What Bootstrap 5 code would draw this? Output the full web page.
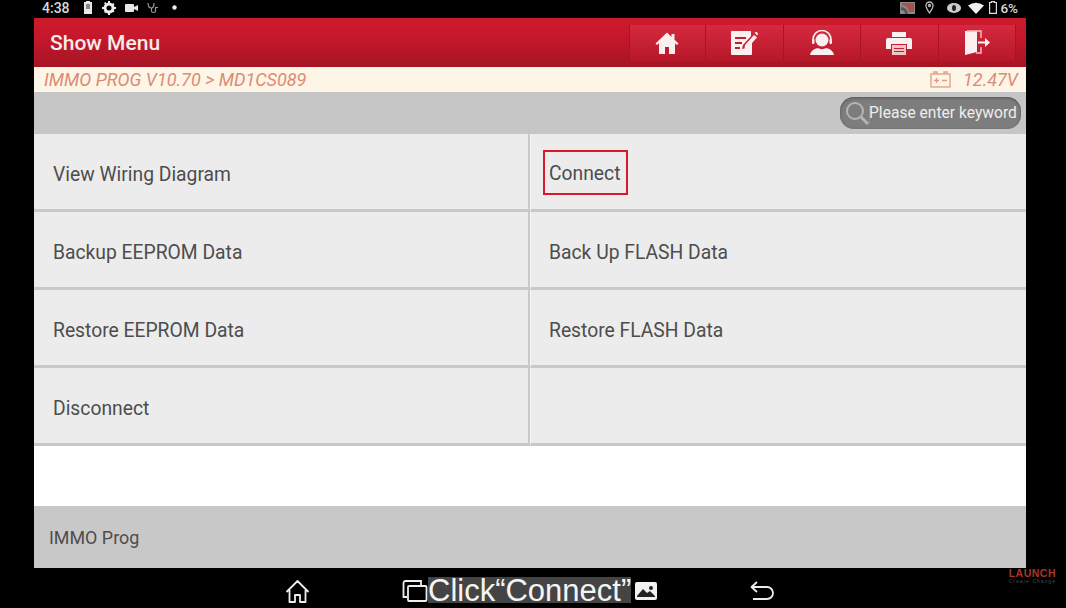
<!DOCTYPE html>
<html>
<head>
    <title>Show Menu</title>
    <meta name="viewport" content="width=device-width, initial-scale=1">
    <link href="https://cdn.jsdelivr.net/npm/bootstrap@5.3.0/dist/css/bootstrap.min.css" rel="stylesheet">
    <style>
        html, body { height: 100%; }
        body {
            background: #000;
            font-family: Roboto, "Liberation Sans", sans-serif;
            overflow: hidden;
        }
        .tablet { position: relative; width: 1066px; height: 608px; background: #000; }

        /* status bar */
        .status-row { height: 18px; padding: 0 48px 3px 42px; color: #d8d8d8; font-size: 14px; font-weight: 500; line-height: 14px; }
        .status-row svg { display: block; }
        .st-battery { margin-left: 13px; }
        .st-gear { margin-left: 9px; }
        .st-cam { margin-left: 9px; }
        .st-steth { margin-left: 9px; }
        .st-dot { margin-left: 13px; }
        .st-pin { margin-left: 10px; }
        .st-eye { margin-left: 13px; }
        .st-wifi { margin-left: 7px; }
        .st-batt2 { margin-left: 5px; }
        .st-pct { margin-left: 3px; font-size: 13.5px; }

        .app-frame { width: 992px; height: 550px; margin-left: 34px; background: #fff; }

        /* red title bar */
        .title-bar {
            height: 49px;
            padding: 6px 10px 6px 16px;
            background: linear-gradient(#cf1a2d 0%, #c2182a 45%, #a61524 100%);
            color: #f6eaea;
        }
        .title-text { font-size: 21px; font-weight: 500; margin-top: 2px; }
        .tool-group { height: 36px; }
        .tool-btn {
            width: 77.5px;
            height: 36px;
            padding: 0;
            border: 0;
            border-right: 1px solid #a81424;
            border-radius: 0;
            background: linear-gradient(#d52940, #b71829);
        }
        .tool-btn:first-child { border-left: 1px solid #a81424; }

        /* breadcrumb strip */
        .crumb-bar {
            height: 25px;
            padding: 0 8px 0 10px;
            background: #fdf6e6;
            color: #dd8a76;
            font-size: 18px;
            font-style: italic;
        }
        .volt-text { margin-left: 12px; }

        /* search strip */
        .search-bar { height: 42px; padding: 5px 5px 0 0; background: #c6c6c6; }
        .search-pill {
            width: 181px;
            height: 32px;
            padding-left: 5px;
            border-radius: 14px;
            background: #7d7d7d;
            box-shadow: inset 0 1px 3px #555;
            color: #eee;
            font-size: 15.6px;
            white-space: nowrap;
        }
        .search-hint { padding-top: 2px; }
        .caret-mark { width: 1px; height: 20px; background: #3fb5ad; margin-right: -1px; }

        /* menu grid */
        .menu-grid { display: grid; grid-template-columns: 496px 496px; grid-auto-rows: 78px; }
        .menu-cell {
            padding: 8px 0 0 19px;
            background: #ececec;
            border-bottom: 3px solid #c9c9c9;
            color: #4d4d4d;
            font-size: 19.3px;
        }
        .menu-cell:nth-child(odd) { border-right: 2px solid #c9c9c9; }
        .menu-cell:nth-child(even) { padding-left: 18px; border-left: 1px solid #f6f6f6; }
        .connect-box { padding: 9px 6px 7px 4px; border: 2px solid #d8192a; line-height: 25px; margin-left: -6px; margin-top: -6px; }
        .blank-gap { height: 60px; background: #fff; }
        .foot-bar { height: 62px; padding: 3px 0 0 15px; background: #c8c8c8; color: #4d4d4d; font-size: 17.9px; }

        /* android nav + caption */
        .nav-row { height: 40px; }
        .nav-row svg { margin-top: 6px; }
        .nav-home { margin-left: 285px; }
        .nav-recent { margin-left: 92px; }
        .caption-text {
            background: #444;
            color: #f4f4f4;
            font-family: "Liberation Sans", Arial, sans-serif;
            font-size: 31px;
            line-height: 28px;
            height: 26px;
            margin-top: 4px;
        }
        .nav-shot { margin-left: 4px; }
        .nav-back { margin-left: 93px; }

        /* watermark sits over the black margin */
        .launch-mark {
            position: absolute;
            right: 10px;
            top: 567px;
            text-align: center;
            color: #a8352b;
            font-family: "Liberation Sans", Arial, sans-serif;
            font-size: 10.5px;
            font-weight: 700;
            line-height: 12px;
            letter-spacing: .5px;
        }
        .launch-sub { color: #4a4a4a; font-size: 5px; font-weight: 400; line-height: 5px; letter-spacing: 1px; }
    </style>
</head>
<body>
<div class="tablet">
    <!-- status bar -->
    <div class="status-row d-flex align-items-center">
        <span>4:38</span>
        <svg class="st-battery" width="10" height="13" viewBox="0 0 10 13" fill="#e8e8e8"><path d="M3 0h4v1h2v12H1V1h2z"/><rect x="3" y="3" width="4" height="5" fill="#888"/></svg>
        <svg class="st-gear" width="14" height="14" viewBox="0 0 14 14"><circle cx="7" cy="7" r="4" fill="none" stroke="#eee" stroke-width="3"/><path d="M6 0h2v2H6zM6 12h2v2H6zM0 6h2v2H0zM12 6h2v2h-2zM2 2l1.500-1 1 1.500-1.500 1zM10 10l1.500-1 1 1.500-1.500 1zM10 3l1.500-1 1 1.500-1.500 1zM2 11l1-1.500 1.500 1-1 1.500z" fill="#eee"/></svg>
        <svg class="st-cam" width="13" height="10" viewBox="0 0 13 10" fill="#e8e8e8"><rect y="1" width="9" height="8" rx="1"/><path d="M9 4l4-2v6L9 6z"/></svg>
        <svg class="st-steth" width="12" height="12" viewBox="0 0 12 12" fill="none" stroke="#999" stroke-width="1.200"><path d="M1 1c0 4 2 5 3.500 5S7 5 7 1M4.500 6v3c0 2 4 2 4 0V6c0-1 2-1 2 0"/></svg>
        <svg class="st-dot" width="5" height="5" viewBox="0 0 5 5"><circle cx="2.500" cy="2.500" r="2.200" fill="#eee"/></svg>
        <div class="ms-auto d-flex align-items-center">
            <svg width="15" height="12" viewBox="0 0 15 12"><rect width="15" height="12" fill="#8a8a8a"/><path d="M1 5a7 7 0 0 1 7 7H5a4 4 0 0 0-4-4z" fill="#555"/><path d="M2 1h12v9H9A8 8 0 0 0 2 3z" fill="#a8534a"/></svg>
            <svg class="st-pin" width="9" height="13" viewBox="0 0 9 13" fill="none" stroke="#bbb" stroke-width="1.300"><path d="M4.500 12C2.500 9 1 7 1 4.500a3.500 3.500 0 0 1 7 0C8 7 6.500 9 4.500 12z"/><circle cx="4.500" cy="4.500" r="1"/></svg>
            <svg class="st-eye" width="14" height="10" viewBox="0 0 14 10"><ellipse cx="7" cy="5" rx="7" ry="5" fill="#ccc"/><ellipse cx="7" cy="5" rx="2" ry="3" fill="#222"/></svg>
            <svg class="st-wifi" width="16" height="12" viewBox="0 0 16 12"><path d="M0 3.500Q8-2 16 3.500L8 12z" fill="#f2f2f2"/></svg>
            <svg class="st-batt2" width="8" height="13" viewBox="0 0 8 13" fill="none" stroke="#ddd" stroke-width="1.200"><path d="M2.500 1.500V.6h3v.9h1.900v10.900H.6V1.500z"/></svg>
            <span class="st-pct">6%</span>
        </div>
    </div>

    <div class="app-frame d-flex flex-column">
        <!-- title bar -->
        <div class="title-bar d-flex align-items-center">
            <span class="title-text">Show Menu</span>
            <div class="tool-group d-flex ms-auto">
                <button class="btn tool-btn d-flex align-items-center justify-content-center" type="button" aria-label="Home">
                    <svg width="24" height="24" viewBox="0 0 24 24" fill="#fbf0f0"><path d="M12 1.500 0.500 12.500l1.500 1.500 2-1.800V23h6v-7h4v7h6V12.200l2 1.800 1.500-1.500-4-3.800V3h-3v3z"/></svg>
                </button>
                <button class="btn tool-btn d-flex align-items-center justify-content-center" type="button" aria-label="Edit">
                    <svg width="28" height="26" viewBox="0 0 28 26"><path d="M1 2a1 1 0 0 1 1-1h19v5l-8 9-1 4 4-1 6-6v12a1 1 0 0 1-1 1H2a1 1 0 0 1-1-1z" fill="#fbf0f0"/><path d="M5 7h11v2H5zM5 12h7v2H5zM5 17h5v2H5z" fill="#c2202f"/><path d="M15 15 24 5l3 2.500-9 10-3.500 1z" fill="#fbf0f0"/><path d="M24.500 2.500l2.500-.5 1 2-1 1.500z" fill="#fbf0f0"/></svg>
                </button>
                <button class="btn tool-btn d-flex align-items-center justify-content-center" type="button" aria-label="Support">
                    <svg width="26" height="26" viewBox="0 0 26 26"><path d="M4 12V9.500a9 9 0 0 1 18 0V12" fill="none" stroke="#fbf0f0" stroke-width="1.500"/><circle cx="13" cy="10" r="6.500" fill="#fbf0f0"/><rect x="3" y="9" width="2.500" height="5" rx="1" fill="#fbf0f0"/><rect x="20.500" y="9" width="2.500" height="5" rx="1" fill="#fbf0f0"/><path d="M1 25c.5-3 3-6 8-7 2 1.500 6 1.500 8 0 5 1 7.500 4 8 7z" fill="#fbf0f0"/></svg>
                </button>
                <button class="btn tool-btn d-flex align-items-center justify-content-center" type="button" aria-label="Print">
                    <svg width="26" height="24" viewBox="0 0 26 24"><path d="M6 1h14v5H6z" fill="#fbf0f0"/><path d="M2 7h22a2 2 0 0 1 2 2v9h-5v-5H5v5H0V9a2 2 0 0 1 2-2z" fill="#fbf0f0"/><path d="M6 14h14v10H6z" fill="#f2c4c8"/><path d="M8 17h10v1H8zM8 20h10v1H8z" fill="#c2202f"/></svg>
                </button>
                <button class="btn tool-btn d-flex align-items-center justify-content-center" type="button" aria-label="Exit">
                    <svg width="26" height="26" viewBox="0 0 26 26"><path d="M1 2h12v21l-12 3z" fill="#fbf0f0" transform="translate(0 -1)"/><path d="M3 1h14v7M17 17v6H12" fill="none" stroke="#f5bcc2" stroke-width="1.500"/><path d="M14 11.500h7V8l5 4.500-5 4.500v-3.500h-7z" fill="#fbf0f0"/></svg>
                </button>
            </div>
        </div>

        <!-- breadcrumb -->
        <div class="crumb-bar d-flex align-items-center">
            <span>IMMO PROG V10.70 &gt; MD1CS089</span>
            <svg class="ms-auto" width="21" height="17" viewBox="0 0 21 17" fill="none" stroke="#e39a84" stroke-width="1.300"><rect x="1" y="3" width="19" height="13"/><path d="M4 3V1h3v2M14 3V1h3v2M4 9.500h5M6.500 7v5M12 9.500h5"/></svg>
            <span class="volt-text">12.47V</span>
        </div>

        <!-- search -->
        <div class="search-bar d-flex justify-content-end">
            <div class="search-pill d-flex align-items-center">
                <svg width="24" height="26" viewBox="0 0 24 26" fill="none" stroke="#b5b5b5"><circle cx="10" cy="11" r="8" stroke-width="2"/><path d="M16 17l7 7" stroke-width="3"/></svg>
                <span class="caret-mark"></span>
                <span class="search-hint">Please enter keyword</span>
            </div>
        </div>

        <!-- menu -->
        <div class="menu-grid">
            <div class="menu-cell d-flex align-items-center">View Wiring Diagram</div>
            <div class="menu-cell d-flex align-items-center"><span class="connect-box">Connect</span></div>
            <div class="menu-cell d-flex align-items-center">Backup EEPROM Data</div>
            <div class="menu-cell d-flex align-items-center">Back Up FLASH Data</div>
            <div class="menu-cell d-flex align-items-center">Restore EEPROM Data</div>
            <div class="menu-cell d-flex align-items-center">Restore FLASH Data</div>
            <div class="menu-cell d-flex align-items-center">Disconnect</div>
            <div class="menu-cell d-flex align-items-center"></div>
        </div>
        <div class="blank-gap"></div>
        <div class="foot-bar d-flex align-items-center">IMMO Prog</div>
    </div>

    <!-- android nav with video caption -->
    <div class="nav-row d-flex align-items-center">
        <svg class="nav-home" width="25" height="25" viewBox="0 0 25 25" fill="none" stroke="#eee" stroke-width="1.800" stroke-linejoin="round"><path d="M1.500 13 12.500 2l11 11M4.500 11v12h5.500v-7h5v7h5.500V11"/></svg>
        <svg class="nav-recent" width="26" height="24" viewBox="0 0 26 24" fill="none" stroke="#eee" stroke-width="1.800"><path d="M5 18H1.500V4a2 2 0 0 1 2-2H19v4"/><rect x="6" y="7" width="18.500" height="15" rx="1"/></svg>
        <span class="caption-text">Click“Connect”</span>
        <svg class="nav-shot" width="22" height="18" viewBox="0 0 22 18"><rect width="22" height="18" rx="2" fill="#f2f2f2"/><path d="M2 14l6-7 4 4 3-2 5 5v1H2z" fill="#222"/><circle cx="16" cy="6" r="2" fill="#222"/></svg>
        <svg class="nav-back" width="24" height="20" viewBox="0 0 24 20" fill="none" stroke="#eee" stroke-width="1.800"><path d="M1 6h16a5.500 5.500 0 0 1 0 12H3"/><path d="M7 1 1.500 6 7 11" stroke-linejoin="round"/></svg>
    </div>

    <div class="launch-mark">LAUNCH<div class="launch-sub">Create·Change</div></div>
</div>
<script src="https://cdn.jsdelivr.net/npm/bootstrap@5.3.0/dist/js/bootstrap.bundle.min.js"></script>
</body>
</html>
